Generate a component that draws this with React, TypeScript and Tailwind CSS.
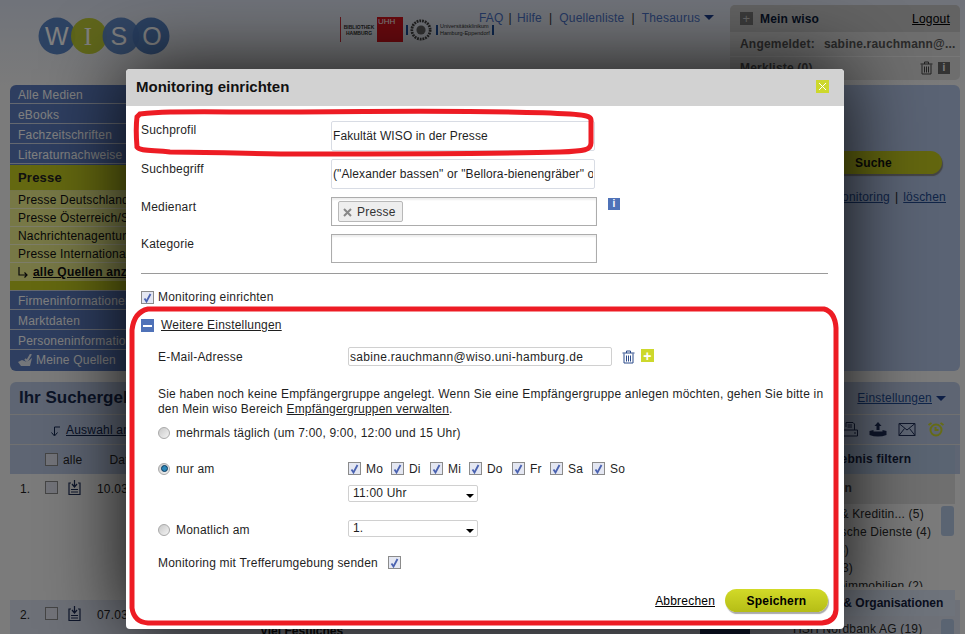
import { ReactNode } from 'react'

const navTop = ['Alle Medien', 'eBooks', 'Fachzeitschriften', 'Literaturnachweise']
const navPress = ['Presse Deutschland', 'Presse Österreich/Schweiz', 'Nachrichtenagenturen', 'Presse International']
const navBottom = ['Firmeninformationen', 'Marktdaten', 'Personeninformationen']
const days = [
  { label: 'Mo', width: 'w-[43px]' },
  { label: 'Di', width: 'w-[39px]' },
  { label: 'Mi', width: 'w-[39px]' },
  { label: 'Do', width: 'w-[43px]' },
  { label: 'Fr', width: 'w-[38px]' },
  { label: 'Sa', width: 'w-[42px]' },
  { label: 'So', width: 'w-[36px]' },
]

function Check({ checked = true }: { checked?: boolean }) {
  return (
    <span className="flex h-[13px] w-[13px] shrink-0 items-center justify-center border border-[#8b8b8b] bg-[#e4e7f2]">
      {checked && (
        <svg width="9" height="10" viewBox="0 0 9 10">
          <path d="M1.5 5.5 L3.5 8.5 L7.5 1" fill="none" stroke="#4a62b0" strokeWidth="1.8" />
        </svg>
      )}
    </span>
  )
}

function Radio({ checked = false }: { checked?: boolean }) {
  return (
    <span className="flex h-[12px] w-[12px] shrink-0 items-center justify-center rounded-full border border-[#a9a9a9] bg-[linear-gradient(135deg,#c8c8c8,#f4f4f4)]">
      {checked && <span className="h-[7px] w-[7px] rounded-full border border-[#0b3a5e] bg-[#2b86b8]" />}
    </span>
  )
}

function TrashIcon({ color, size = 13 }: { color: string; size?: number }) {
  return (
    <svg width={size} height={size + 1} viewBox="0 0 13 14" fill="none" stroke={color} strokeWidth="1">
      <path d="M0.5 3 H12.5 M4.5 3 V1 H8.5 V3 M2 3.5 V13 H11 V3.5 M4.5 5.5 V11.5 M6.5 5.5 V11.5 M8.5 5.5 V11.5" />
    </svg>
  )
}

function Select({ children, arrowTop }: { children: ReactNode; arrowTop: string }) {
  return (
    <div className="relative h-[17px] w-[130px] rounded-[2px] border border-[#d0d0d0] pl-[4px] leading-[14px]">
      {children}
      <span className={`absolute right-[3px] h-0 w-0 border-x-[4px] border-t-[4px] border-x-transparent border-t-black ${arrowTop}`} />
    </div>
  )
}

function FormRow({ label, children, extra, pad = 'pt-[3px]' }: { label: string; children: ReactNode; extra?: ReactNode; pad?: string }) {
  return (
    <div className="flex items-start">
      <div className={`w-[190px] leading-[15px] ${pad}`}>{label}</div>
      {children}
      {extra}
    </div>
  )
}

function Sidebar() {
  const item = 'h-[19px] border-b border-[#c8d0e0] pl-[8px] leading-[20px] text-[#ffffff] whitespace-nowrap'
  return (
    <div className="w-[160px] shrink-0 overflow-hidden rounded-[6px] bg-[#5c7cc0]">
      {navTop.map((n) => (
        <div key={n} className={`${item} mb-[1px]`}>{n}</div>
      ))}
      <div className="h-[26px] border-b border-[#e8ec90] bg-[#c8d020] pl-[8px] text-[13px] font-bold leading-[26px] text-[#222]">Presse</div>
      <div className="bg-[#eef08c]">
        {navPress.map((n) => (
          <div key={n} className="h-[18px] border-b border-[#fafad0] pl-[8px] leading-[18px] whitespace-nowrap text-[#111]">{n}</div>
        ))}
        <div className="flex h-[18px] items-center pl-[8px] font-bold whitespace-nowrap text-[#111]">
          <svg width="10" height="12" viewBox="0 0 10 12" fill="none" stroke="#111" strokeWidth="1.2" className="mr-[5px]">
            <path d="M1 1 V9 H9 M6.5 6.5 L9 9 L6.5 11.5" />
          </svg>
          <span className="underline">alle Quellen anzeigen</span>
        </div>
        <div className="h-[10px] border-b border-[#c8d0e0] bg-[#c8d020]" />
      </div>
      {navBottom.map((n) => (
        <div key={n} className={`${item} mb-[1px]`}>{n}</div>
      ))}
      <div className="flex h-[19px] items-center pl-[8px] leading-[19px] text-[#ffffff] whitespace-nowrap">
        <svg width="15" height="14" viewBox="0 0 15 14" className="mr-[3px]">
          <path d="M0 8 L4 6 L9 8 L14 4 L12 12 H3 Z" fill="#e8ecf4" />
          <path d="M7 5 L9 7 L13 0" fill="none" stroke="#e8ecf4" strokeWidth="2" />
        </svg>
        Meine Quellen
      </div>
    </div>
  )
}

function ResultRow({ n, date, className, children }: { n: string; date: string; className: string; children?: ReactNode }) {
  return (
    <div className={`relative flex pl-[10px] ${className}`}>
      <span className="w-[25px]">{n}</span>
      <span className="mr-[10px] mt-[1px]"><Check checked={false} /></span>
      <svg width="13" height="15" viewBox="0 0 13 15" fill="none" stroke="#1c2d57" strokeWidth="1.2" className="mr-[16px]">
        <path d="M6.5 0 V6 M4 4 L6.5 7 L9 4 M3 3 H1 V14.5 H12 V3 H10 M3 9.5 H10 M3 12 H10" />
      </svg>
      <span className="text-[#232323]">{date}</span>
      {children}
    </div>
  )
}

function FilterPanel() {
  return (
    <div className="absolute right-[5px] top-[63px] w-[165px] text-[#2a2a2a]">
      <div className="h-[29px] bg-[#b4c8e4] pl-[30px] font-bold leading-[29px] text-[#14213f]">Ergebnis filtern</div>
      <div className="h-[30px] bg-[#dedede] pl-[5px] font-bold leading-[28px] text-[#444]">Branchen</div>
      <div className="relative h-[83px] overflow-hidden pl-[5px] pt-[1px] leading-[18px]">
        <div>Banken &amp; Kreditin... (5)</div>
        <div>Medizinische Dienste (4)</div>
        <div>Hotels (3)</div>
        <div>Handel (3)</div>
        <div>Gewerbeimmobilien (2)</div>
        <span className="absolute right-[1px] top-[2px] h-[30px] w-[13px] rounded-[3px] bg-[#b4c8e4]" />
      </div>
      <div className="mt-[3px] h-[26px] bg-[#dce6f6] pl-[10px] font-bold leading-[27px] tracking-normal text-[#14213f]">Firmen &amp; Organisationen</div>
      <div className="relative pl-[3px] pt-[4px]">
        HSH Nordbank AG (19)
        <span className="absolute right-[1px] top-[3px] h-[20px] w-[13px] rounded-[3px] bg-[#b4c8e4]" />
      </div>
    </div>
  )
}

export default function App() {
  return (
    <div className="relative h-[634px] w-[965px] overflow-hidden bg-[#f6f6f6] font-['Liberation_Sans',Arial,sans-serif] text-[12px] tracking-[0.2px] text-[#1f1f1f]">
      {/* page behind the dialog */}
      <header className="flex h-[85px] bg-[linear-gradient(#e0e6f4,#f6f6f6)] px-[5px] pt-[5px]">
        <div className="flex w-[474px] shrink-0">
          <svg width="135" height="40" viewBox="0 0 135 40" className="ml-[33px] mt-[12px] shrink-0">
            <circle cx="19" cy="19" r="18.5" fill="#5b86c6" />
            <circle cx="51" cy="19" r="18" fill="#bfcb2b" fillOpacity="0.95" />
            <circle cx="83" cy="19" r="18.5" fill="#5b86c6" fillOpacity="0.95" />
            <circle cx="113" cy="19" r="18.5" fill="#4f7cc0" fillOpacity="0.95" />
            <text x="19" y="28" textAnchor="middle" fontSize="25" fill="#fff" fontFamily="Liberation Sans">W</text>
            <text x="50" y="28" textAnchor="middle" fontSize="25" fill="#fff" fontFamily="Liberation Serif">I</text>
            <text x="81" y="28" textAnchor="middle" fontSize="25" fill="#fff" fontFamily="Liberation Sans">S</text>
            <text x="114" y="28" textAnchor="middle" fontSize="25" fill="#fff" fontFamily="Liberation Sans">O</text>
          </svg>
          <div className="ml-[167px] mt-[12px] flex h-[25px] shrink-0 items-center tracking-normal">
            <div className="flex h-full w-[37px] items-center justify-center border-l border-[#c8303a] text-center text-[5px] font-bold leading-[6px] text-[#333]">
              BIBLIOTHEK<br />HAMBURG
            </div>
            <div className="h-full w-[26px] bg-[#d8141f] pl-[1px] text-[8px] leading-[10px] text-white">UHH</div>
            <span className="ml-[3px] h-[10px] w-[2px] bg-[#1c4f9c]" />
            <svg width="22" height="22" viewBox="0 0 24 24" className="ml-[2px]">
              <circle cx="12" cy="12" r="10" fill="none" stroke="#444" strokeWidth="3" strokeDasharray="2 1" />
              <circle cx="12" cy="12" r="5" fill="#666" />
            </svg>
            <span className="ml-[4px] h-[10px] w-[2px] bg-[#1c4f9c]" />
            <div className="ml-[2px] text-[5.5px] leading-[7px] whitespace-nowrap text-[#333]">
              Universitätsklinikum<br />Hamburg-Eppendorf
            </div>
            <span className="ml-[2px] h-[10px] w-[2px] bg-[#1c4f9c]" />
          </div>
        </div>
        <nav className="flex h-[25px] w-[251px] shrink-0 items-center text-[#4a72c8]">
          <span>FAQ</span>
          <span className="mx-[5px] text-[#333]">|</span>
          <span>Hilfe</span>
          <span className="mx-[7px] text-[#333]">|</span>
          <span>Quellenliste</span>
          <span className="mx-[7px] text-[#333]">|</span>
          <span>Thesaurus</span>
          <span className="ml-[4px] h-0 w-0 border-x-[5px] border-t-[5px] border-x-transparent border-t-[#1c3f8c]" />
        </nav>
        <div className="h-[75px] w-[230px] shrink-0 overflow-hidden rounded-[5px] bg-[#dcdcdc] font-bold">
          <div className="flex h-[27px] items-center bg-[#c6c6c6] px-[10px]">
            <span className="mr-[7px] flex h-[13px] w-[13px] items-center justify-center bg-[#777] text-[13px] font-normal leading-none text-[#ccc]">+</span>
            <span className="flex-1 text-[#0b1a38]">Mein wiso</span>
            <span className="font-normal text-black underline">Logout</span>
          </div>
          <div className="flex h-[25px] items-center border-b border-[#eee] px-[10px] text-[#555]">
            Angemeldet:<span className="ml-[9px]">sabine.rauchmann@...</span>
          </div>
          <div className="flex h-[22px] items-center px-[10px] text-[#555]">
            <span className="flex-1">Merkliste (0)</span>
            <TrashIcon color="#444" />
            <span className="ml-[5px] flex h-[12px] w-[12px] items-center justify-center bg-[#666] text-[10px] leading-none text-white">i</span>
          </div>
        </div>
      </header>

      <div className="flex gap-[10px] pl-[10px] pr-[5px]">
        <Sidebar />
        <div className="relative h-[286px] flex-1 rounded-[6px] bg-[#b4c6e8]">
          <span className="absolute right-[18px] top-[66px] flex h-[23px] w-[150px] items-center justify-end rounded-full bg-[#c6cd1e] pr-[50px] font-bold text-[#111] shadow-[1px_2px_1px_#888]">Suche</span>
          <span className="absolute right-[14px] top-[103px] text-[#234a90]">
            <span className="underline">Monitoring</span>
            <span className="mx-[5px] text-[#222]">|</span>
            <span className="underline">löschen</span>
          </span>
        </div>
      </div>

      <section className="relative ml-[10px] mr-[5px] mt-[11px] h-[252px] rounded-t-[6px] bg-[#f6f6f6]">
        <div className="flex h-[33px] items-center justify-between rounded-t-[6px] border-b border-[#e0e0e0] bg-[#bccae6] pl-[9px] pr-[14px]">
          <span className="text-[17px] font-bold tracking-normal text-[#16294f]">Ihr Suchergebnis</span>
          <span className="flex items-center text-[#1e4a94] underline">
            Einstellungen
            <span className="ml-[4px] h-0 w-0 border-x-[5px] border-t-[5px] border-x-transparent border-t-[#1c3f8c]" />
          </span>
        </div>
        <div className="relative flex h-[30px] items-center justify-between border-b border-[#e0e0e0] bg-[#bccae6] pl-[40px] pr-[15px]">
          <span className="flex items-center text-[#10254e]">
            <svg width="11" height="11" viewBox="0 0 11 11" fill="none" stroke="#10254e" className="mr-[5px] mt-[4px]">
              <path d="M10 1 H4.5 V9 M1.5 6.5 L4.5 10 L7.5 6.5" />
            </svg>
            <span className="underline">Auswahl anzeigen</span>
          </span>
          <span className="flex items-center gap-[11px]">
            <svg width="16" height="15" viewBox="0 0 16 15" fill="none" stroke="#1c2d57" strokeWidth="1">
              <path d="M4 5 V0.5 H11 L12.5 2 V8 M5.5 3 H10 M5.5 5 H10 M0.5 8 H15.5 V14 H0.5 Z M12 11 H14" />
            </svg>
            <svg width="18" height="15" viewBox="0 0 17 15" fill="#1c2d57">
              <path d="M8.5 0 L12 4 H10 V8 H7 V4 H5 Z M0 9 L4 8 V9.5 H13 V8 L17 9 V13 Q8.5 16 0 13 Z" />
            </svg>
            <svg width="18" height="13" viewBox="0 0 17 13" fill="none" stroke="#1c2d57">
              <path d="M0.5 0.5 H16.5 V12.5 H0.5 Z M0.5 0.5 L8.5 7 L16.5 0.5 M0.5 12.5 L6 5.5 M16.5 12.5 L11 5.5" />
            </svg>
            <svg width="18" height="15" viewBox="0 0 17 15" fill="none" stroke="#cdd82c" strokeWidth="2">
              <circle cx="8.5" cy="8" r="5.5" />
              <path d="M8 5 V8 H11 M1 3 L4 1 M16 3 L13 1" />
            </svg>
          </span>
        </div>
        <div className="flex h-[29px] items-center bg-[#bccae6] pl-[35px] text-[#232323]">
          <Check checked={false} />
          <span className="ml-[5px]">alle</span>
          <span className="ml-[27px]">Datum</span>
        </div>
        <ResultRow n="1." date="10.03.2014" className="h-[126px] pt-[6px]" />
        <ResultRow n="2." date="07.03.2014" className="h-[34px] bg-[#dce2f0] pt-[6px]">
          <span className="absolute left-[250px] top-[22px] font-bold tracking-normal text-[#111]">Viel Festliches</span>
          <span className="absolute left-[690px] top-[25px] h-[10px] w-[50px] bg-[#1c2d57]" />
        </ResultRow>
        <FilterPanel />
      </section>

      {/* dim layer */}
      <div className="absolute inset-0 bg-black/50" />

      {/* dialog */}
      <div className="absolute left-[126px] top-[69px] h-[560px] w-[718px] overflow-hidden rounded-[4px] bg-white shadow-[0_0_80px_rgba(0,0,0,0.9)]">
        <div className="flex h-[37px] items-center justify-between bg-[#d2d2d2] pl-[10px] pr-[15px]">
          <span className="text-[15px] font-bold tracking-normal text-[#111]">Monitoring einrichten</span>
          <span className="mb-[3px] flex h-[13px] w-[13px] items-center justify-center bg-[#cdd82c]">
            <svg width="9" height="9" viewBox="0 0 9 9"><path d="M1 1 L8 8 M8 1 L1 8" stroke="#fff" /></svg>
          </span>
        </div>

        <div className="pl-[15px] pr-[16px] pt-[15px]">
          <div className="flex flex-col gap-[8px]">
            <FormRow label="Suchprofil" pad="pt-[2px]">
              <input readOnly value="Fakultät WISO in der Presse" className="h-[30px] w-[264px] rounded-[2px] border border-[#d8dce4] px-[1px] tracking-[0.1px] outline-none" />
            </FormRow>
            <FormRow label="Suchbegriff">
              <input readOnly value={'("Alexander bassen" or "Bellora-bienengräber" or "Fakultät WISO")'} className="h-[30px] w-[264px] rounded-[2px] border border-[#d8dce4] px-[1px] tracking-[0.1px] outline-none" />
            </FormRow>
            <FormRow
              label="Medienart"
              extra={<span className="ml-[11px] mt-[1px] flex h-[12px] w-[12px] items-center justify-center bg-[#4f72b8] text-[10px] font-bold leading-none text-white">i</span>}
            >
              <div className="h-[29px] w-[266px] border border-[#acacac] px-[6px] pt-[3px] shadow-[inset_0_2px_2px_#eee]">
                <span className="flex h-[21px] w-[65px] items-center rounded-[2px] border border-[#b8b8b8] bg-[#eeeeee] pl-[4px] text-[#333]">
                  <svg width="9" height="9" viewBox="0 0 9 9" className="mr-[5px] mt-[2px]"><path d="M1 1 L8 8 M8 1 L1 8" stroke="#888" strokeWidth="2" /></svg>
                  Presse
                </span>
              </div>
            </FormRow>
            <FormRow label="Kategorie">
              <div className="h-[29px] w-[266px] border border-[#acacac] shadow-[inset_0_2px_2px_#eee]" />
            </FormRow>
          </div>

          <div className="mt-[10px] border-t border-[#9a9a9a] pt-[17px]">
            <label className="flex items-center leading-[13px]">
              <Check />
              <span className="ml-[4px]">Monitoring einrichten</span>
            </label>
            <div className="mt-[15px] flex items-center leading-[13px]">
              <span className="flex h-[13px] w-[13px] items-center justify-center bg-[#4f72b8]">
                <span className="h-[2px] w-[9px] bg-white" />
              </span>
              <span className="ml-[7px] underline">Weitere Einstellungen</span>
            </div>
          </div>

          <div className="ml-[17px] mt-[15px]">
            <div className="flex h-[19px] items-center">
              <span className="w-[190px]">E-Mail-Adresse</span>
              <input readOnly value="sabine.rauchmann@wiso.uni-hamburg.de" className="h-[19px] w-[264px] rounded-[2px] border border-[#d0d0d0] px-[1px] tracking-[0.3px] outline-none" />
              <span className="ml-[10px]"><TrashIcon color="#2b4a8a" /></span>
              <span className="ml-[6px] mb-[2px] flex h-[13px] w-[13px] items-center justify-center bg-[#cdd82c] text-[14px] font-bold leading-none text-white">+</span>
            </div>
            <p className="mt-[21px] w-[670px] leading-[15px]">
              Sie haben noch keine Empfängergruppe angelegt. Wenn Sie eine Empfängergruppe anlegen möchten, gehen Sie bitte in den Mein wiso Bereich <span className="underline">Empfängergruppen verwalten</span>.
            </p>
            <div className="mt-[8px] flex h-[15px] items-center">
              <Radio />
              <span className="ml-[6px]">mehrmals täglich (um 7:00, 9:00, 12:00 und 15 Uhr)</span>
            </div>
            <div className="mt-[21px] flex items-start">
              <div className="flex h-[15px] w-[190px] items-center">
                <Radio checked />
                <span className="ml-[6px]">nur am</span>
              </div>
              <div>
                <div className="flex h-[15px] items-center">
                  {days.map((d) => (
                    <span key={d.label} className={`flex items-center ${d.width}`}>
                      <Check />
                      <span className="ml-[5px]">{d.label}</span>
                    </span>
                  ))}
                </div>
                <div className="mt-[9px]">
                  <Select arrowTop="top-[8px]">11:00 Uhr</Select>
                </div>
              </div>
            </div>
            <div className="mt-[18px] flex items-start">
              <div className="flex h-[18px] w-[190px] items-center pt-[1px]">
                <Radio />
                <span className="ml-[6px]">Monatlich am</span>
              </div>
              <Select arrowTop="top-[8px]">1.</Select>
            </div>
            <div className="mt-[17px] flex h-[15px] items-center">
              <span className="mr-[10px]">Monitoring mit Trefferumgebung senden</span>
              <Check />
            </div>
          </div>

          <div className="mt-[19px] flex items-center justify-end">
            <span className="mr-[10px] text-black underline">Abbrechen</span>
            <span className="flex h-[23px] w-[103px] items-center justify-center rounded-full bg-[linear-gradient(#d2da28,#b5bd16)] font-bold text-black shadow-[1px_2px_1px_#aaa]">Speichern</span>
          </div>
        </div>
      </div>

      {/* hand drawn red marks */}
      <svg width="965" height="634" viewBox="0 0 965 634" fill="none" stroke="#ed1c24" strokeWidth="5" className="pointer-events-none absolute left-0 top-0">
        <path d="M140 114 C 165 111, 180 112, 300 112 C 400 111, 520 111, 570 114 C 585 115, 591 116, 591 120 L 591 143 C 591 150, 585 151, 560 152 C 500 154, 400 154, 300 154 C 260 154, 210 152, 170 152 C 150 150, 140 151, 137 147 C 136 135, 136 125, 137 117 Z" />
        <path d="M148 309 L 824 309 Q 835 312 836 328 L 836 610 Q 835 622 822 623 L 148 623 Q 134 622 132 608 L 132 330 Q 134 312 148 309 Z" />
      </svg>
    </div>
  )
}
